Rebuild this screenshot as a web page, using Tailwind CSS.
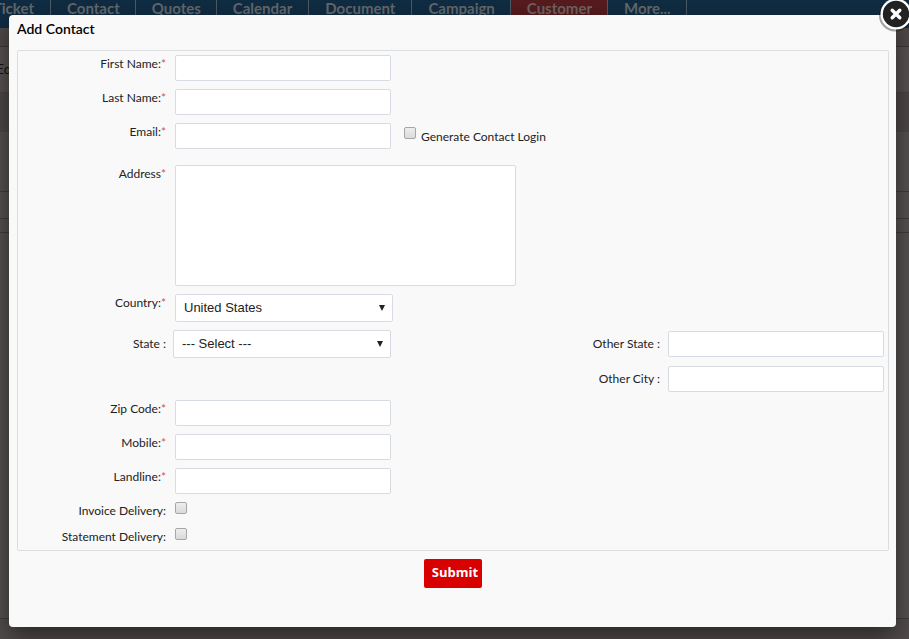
<!DOCTYPE html>
<html lang="en">
<head>
<meta charset="utf-8">
<meta name="viewport" content="width=device-width, initial-scale=1">
<title>Add Contact</title>
<script src="https://cdn.jsdelivr.net/npm/@tailwindcss/browser@4"></script>
</head>
<body class="relative min-h-screen overflow-hidden bg-[#565150] font-['Lato',sans-serif] text-xs text-[#222]">

<!-- Dimmed page behind the dialog -->
<div class="absolute inset-0 flex flex-col overflow-hidden">
  <nav class="flex h-7 shrink-0 bg-[#102c42] text-[15px] leading-4 font-bold text-[#63686c]">
    <a href="#" class="-ml-7 w-[79px] border-r border-[#4d5a64] pr-4 text-right">Ticket</a>
    <a href="#" class="border-r border-[#4d5a64] pr-[15px] pl-4">Contact</a>
    <a href="#" class="border-r border-[#4d5a64] pr-[15px] pl-4">Quotes</a>
    <a href="#" class="border-r border-[#4d5a64] px-4">Calendar</a>
    <a href="#" class="border-r border-[#4d5a64] px-4">Document</a>
    <a href="#" class="border-r border-[#4d5a64] pr-[15px] pl-4">Campaign</a>
    <a href="#" class="border-r border-[#4d5a64] bg-[#561b1e] pr-[15px] pl-4 text-[#706361]">Customer</a>
    <a href="#" class="border-r border-[#4d5a64] pr-[15px] pl-4">More...</a>
  </nav>
  <div class="h-[19px] shrink-0 border-b border-[#3b3736] bg-[#4f4a49]"></div>
  <div class="-ml-1 h-[46px] shrink-0 border-b border-[#484443] bg-[#575251] text-sm leading-11 text-[#151313]">Edit</div>
  <div class="h-[39px] shrink-0 bg-[#4d4847]"></div>
  <div class="h-15 shrink-0 border-b border-[#3f3b3a]"></div>
  <div class="h-[27px] shrink-0 border-b border-[#3f3b3a]"></div>
  <div class="h-3.5 shrink-0 border-b border-[#3f3b3a]"></div>
  <div class="grow border-b border-[#3f3b3a]"></div>
  <div class="h-5 shrink-0 bg-[#524d4c]"></div>
</div>

<section role="dialog" aria-labelledby="dialog-title" class="relative mt-[15px] mr-[13px] mb-3 ml-[9px] rounded bg-[#f9f9f9] pr-[7px] pb-[39px] pl-2 shadow-[0_10px_25px_rgba(0,0,0,0.5)]">
  <button type="button" aria-label="Close" class="absolute -top-[19px] -right-[18px] size-9">
    <svg viewBox="0 0 36 36" class="size-9">
      <circle cx="17" cy="19.500" r="16" fill="#000" opacity=".35"/>
      <circle cx="18" cy="18" r="15.500" fill="#fff"/>
      <circle cx="18" cy="18" r="13.200" fill="#222"/>
      <path d="M14.200 14.200l7.600 7.600M21.800 14.200l-7.600 7.600" stroke="#fff" stroke-width="3.400" stroke-linecap="round"/>
    </svg>
  </button>

  <h1 id="dialog-title" class="h-[35px] text-sm leading-7 font-semibold text-black">Add Contact</h1>

  <form>
    <div class="flex flex-col gap-2 rounded-xs border border-[#dcdfe2] py-1 pr-1 leading-[18px]">
      <div class="flex items-start">
        <label for="first" class="w-[157px] shrink-0 pr-[9px] text-right">First Name:<span class="text-[#d9534f]">*</span></label>
        <input id="first" type="text" class="h-[26px] w-[216px] rounded-xs border border-[#d6dce2] bg-white px-2">
      </div>
      <div class="flex items-start">
        <label for="last" class="w-[157px] shrink-0 pr-[9px] text-right">Last Name:<span class="text-[#d9534f]">*</span></label>
        <input id="last" type="text" class="h-[26px] w-[216px] rounded-xs border border-[#d6dce2] bg-white px-2">
      </div>
      <div class="flex items-start">
        <label for="email" class="w-[157px] shrink-0 pr-[9px] text-right">Email:<span class="text-[#d9534f]">*</span></label>
        <input id="email" type="text" class="h-[26px] w-[216px] rounded-xs border border-[#d6dce2] bg-white px-2">
        <input id="login" type="checkbox" class="mt-1 ml-[13px] size-3 appearance-none rounded-xs border border-[#a6a6a6] bg-linear-to-b from-[#eee] to-[#dadada]">
        <label for="login" class="mt-1 ml-[5px] leading-5">Generate Contact Login</label>
      </div>
      <div class="mt-2 flex items-start">
        <label for="address" class="w-[157px] shrink-0 pr-[9px] text-right">Address<span class="text-[#d9534f]">*</span></label>
        <textarea id="address" class="h-[121px] w-[341px] resize-none rounded-xs border border-[#d6dce2] bg-white p-2"></textarea>
      </div>
      <div class="flex items-start">
        <label for="country" class="w-[157px] shrink-0 pr-[9px] text-right">Country:<span class="text-[#d9534f]">*</span></label>
        <div class="relative w-[218px]">
          <select id="country" class="block h-7 w-full appearance-none rounded-xs border border-[#d6dce2] bg-white px-2 font-['Liberation_Sans',Arial,sans-serif] text-[13px]"><option>United States</option></select>
          <svg viewBox="0 0 6 6" class="pointer-events-none absolute top-[11px] right-2 size-1.5" aria-hidden="true"><path d="M0 0h6L3 6z" fill="#222"/></svg>
        </div>
      </div>
      <div class="flex items-start">
        <label for="state" class="w-[155px] shrink-0 pr-[7px] text-right leading-7">State :</label>
        <div class="relative w-[218px]">
          <select id="state" class="block h-7 w-full appearance-none rounded-xs border border-[#d6dce2] bg-white px-2 font-['Liberation_Sans',Arial,sans-serif] text-[13px]"><option>--- Select ---</option></select>
          <svg viewBox="0 0 6 6" class="pointer-events-none absolute top-[11px] right-2 size-1.5" aria-hidden="true"><path d="M0 0h6L3 6z" fill="#222"/></svg>
        </div>
        <div class="ml-auto flex h-7 items-center gap-2">
          <label for="other-state">Other State :</label>
          <input id="other-state" type="text" class="h-[26px] w-[216px] rounded-xs border border-[#d6dce2] bg-white px-2">
        </div>
      </div>
      <div class="flex items-center justify-end gap-2">
        <label for="other-city">Other City :</label>
        <input id="other-city" type="text" class="h-[26px] w-[216px] rounded-xs border border-[#d6dce2] bg-white px-2">
      </div>
      <div class="flex items-start">
        <label for="zip" class="w-[157px] shrink-0 pr-[9px] text-right">Zip Code:<span class="text-[#d9534f]">*</span></label>
        <input id="zip" type="text" class="h-[26px] w-[216px] rounded-xs border border-[#d6dce2] bg-white px-2">
      </div>
      <div class="flex items-start">
        <label for="mobile" class="w-[157px] shrink-0 pr-[9px] text-right">Mobile:<span class="text-[#d9534f]">*</span></label>
        <input id="mobile" type="text" class="h-[26px] w-[216px] rounded-xs border border-[#d6dce2] bg-white px-2">
      </div>
      <div class="flex items-start">
        <label for="landline" class="w-[157px] shrink-0 pr-[9px] text-right">Landline:<span class="text-[#d9534f]">*</span></label>
        <input id="landline" type="text" class="h-[26px] w-[216px] rounded-xs border border-[#d6dce2] bg-white px-2">
      </div>
      <div class="flex items-start">
        <label for="invoice" class="w-[157px] shrink-0 pr-[9px] text-right">Invoice Delivery:</label>
        <input id="invoice" type="checkbox" class="size-3 appearance-none rounded-xs border border-[#a6a6a6] bg-linear-to-b from-[#eee] to-[#dadada]">
      </div>
      <div class="flex items-start">
        <label for="statement" class="w-[157px] shrink-0 pr-[9px] text-right">Statement Delivery:</label>
        <input id="statement" type="checkbox" class="size-3 appearance-none rounded-xs border border-[#a6a6a6] bg-linear-to-b from-[#eee] to-[#dadada]">
      </div>
    </div>
    <div class="mt-2 flex justify-center">
      <button type="submit" class="h-[29px] rounded-xs bg-[#d90000] pr-1 pb-0.5 pl-2 font-['Open_Sans',sans-serif] text-[13px] font-bold text-white">Submit</button>
    </div>
  </form>
</section>
</body>
</html>
